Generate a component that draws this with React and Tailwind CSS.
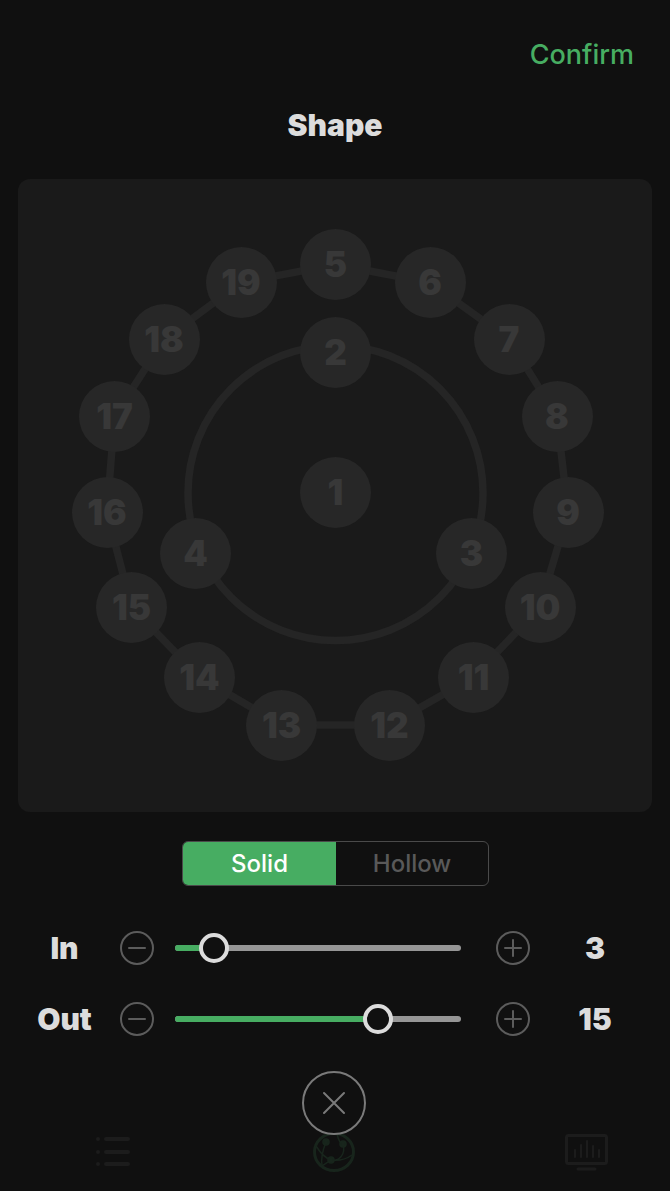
const nodes = [
  ['1', 335.5, 492.5], ['2', 335.5, 352.5], ['3', 471.5, 553], ['4', 195.5, 553],
  ['5', 335.5, 264.5], ['6', 430, 282.5], ['7', 509, 339.5], ['8', 557, 416.5],
  ['9', 568, 512.5], ['10', 540, 607], ['11', 473.5, 677], ['12', 389.5, 725],
  ['13', 281.5, 725], ['14', 199.5, 677], ['15', 131.5, 607], ['16', 107, 512.5],
  ['17', 114.5, 416.5], ['18', 164, 339.5], ['19', 241, 282.5],
];

// outer ring runs through nodes 5..19
const ring = nodes.slice(4).map((n) => `${n[1] - 18},${n[2] - 179}`).join(' ');

function Diagram() {
  return (
    <div className="relative mx-[18px] h-[633px] rounded-[12px] bg-[#1a1a1a]">
      <svg className="absolute inset-0" width="634" height="633" fill="none" stroke="#252525" strokeWidth="7.5">
        <circle cx="317.5" cy="314" r="147.5" />
        <polygon points={ring} />
      </svg>
      {nodes.map(([label, x, y]) => (
        <div
          key={label}
          className="absolute flex h-[71px] w-[71px] items-center justify-center rounded-full bg-[#272727] text-[35px] font-black text-[#383838]"
          style={{ left: x - 18 - 35.5, top: y - 179 - 35.5 }}
        >
          {label}
        </div>
      ))}
    </div>
  );
}

function RoundBtn({ plus }) {
  return (
    <svg width="34" height="34" viewBox="0 0 34 34" fill="none" stroke="#5c5c5c" strokeWidth="2" strokeLinecap="round">
      <circle cx="17" cy="17" r="16" />
      <path d="M9 17h16" />
      {plus && <path d="M17 9v16" />}
    </svg>
  );
}

function SliderRow({ label, value, pct }) {
  return (
    <div className="flex h-[56px] items-center">
      <div className="w-[129px] text-center text-[30px] font-black text-[#dcdcdc]">{label}</div>
      <div className="ml-[-9px]">
        <RoundBtn />
      </div>
      <div className="relative ml-[21px] h-[6px] w-[286px] rounded-full bg-[#969696]">
        <div className="h-full rounded-full bg-[#47ad62]" style={{ width: `${pct}%` }} />
        <div
          className="absolute top-[-12px] h-[30px] w-[30px] rounded-full border-[4px] border-[#dcdcdc] bg-[#101010]"
          style={{ left: `calc(${pct}% - 15px)` }}
        />
      </div>
      <div className="ml-[35px]">
        <RoundBtn plus />
      </div>
      <div className="flex-1 pr-[10px] text-center text-[30px] font-black text-[#dcdcdc]">{value}</div>
    </div>
  );
}

function BottomNav() {
  return (
    <div className="mt-auto flex h-[60px] items-start pl-[96px]">
      <svg width="36" height="34" viewBox="0 0 36 34" fill="#1c1c1c" className="mt-[3px]">
        <circle cx="2" cy="5" r="2" />
        <circle cx="2" cy="18" r="2" />
        <circle cx="2" cy="30" r="2" />
        <rect x="8" y="3" width="26" height="4" rx="2" />
        <rect x="8" y="16" width="26" height="4" rx="2" />
        <rect x="8" y="28" width="26" height="4" rx="2" />
      </svg>
      <svg width="42" height="40" viewBox="0 0 42 40" fill="none" stroke="#18251c" strokeWidth="1.5" className="mt-[1px] ml-[181px]">
        <ellipse cx="21" cy="20" rx="19.5" ry="18.5" strokeWidth="3" />
        <path d="M3 14c5 8 9 12 15 14 7 1 14 0 21-5M13 10c-4 10-5 18-4 24M30 12c3 10-4 18-12 16-4 3-8 5-10 7M24 2c2 8 4 10 6 10" />
        <circle cx="13" cy="10" r="3" fill="#18251c" />
        <circle cx="30" cy="12" r="3" fill="#18251c" />
        <circle cx="18" cy="28" r="3" fill="#18251c" />
      </svg>
      <svg width="43" height="37" viewBox="0 0 43 37" fill="none" stroke="#1c1c1c" strokeWidth="3" strokeLinecap="round" className="mt-[3px] ml-[210px]">
        <rect x="1.5" y="1.5" width="40" height="28" rx="2" />
        <path d="M10 16v7M16 11v12M22 7v16M28 12v11M34 16v7" strokeWidth="2" />
        <path d="M13 35h17" />
      </svg>
    </div>
  );
}

export default function App() {
  return (
    <div className="relative flex h-[1191px] w-[670px] flex-col overflow-hidden bg-[#101010] font-['Inter',sans-serif]">
      <div className="flex h-[110px] justify-end pt-[36px] pr-[36px] text-[27px] leading-[38px] font-medium text-[#47ad62]">Confirm</div>
      <div className="h-[69px] text-center text-[30px] leading-[30px] font-black text-[#dcdcdc]">Shape</div>
      <Diagram />
      <div className="mt-[29px] flex justify-center pl-[1px]">
        <div className="flex h-[45px] w-[307px] overflow-hidden rounded-[6px] border border-[#4a4a4a]">
          <div className="flex w-[153px] items-center justify-center bg-[#47ad62] pt-[1px] text-[24px] font-medium text-white">Solid</div>
          <div className="flex flex-1 items-center justify-center pt-[1px] text-[24px] font-medium text-[#595959]">Hollow</div>
        </div>
      </div>
      <div className="mt-[34px] flex flex-col gap-[15px]">
        <SliderRow label="In" value="3" pct={13.5} />
        <SliderRow label="Out" value="15" pct={71} />
      </div>
      <BottomNav />
      <button className="absolute top-[1071px] left-[302px] flex h-[64px] w-[64px] items-center justify-center rounded-full border-2 border-[#7a7a7a] bg-[#101010]">
        <svg width="24" height="24" viewBox="0 0 24 24" fill="none" stroke="#7a7a7a" strokeWidth="2" strokeLinecap="round">
          <path d="M2 2l20 20M22 2L2 22" />
        </svg>
      </button>
    </div>
  );
}
